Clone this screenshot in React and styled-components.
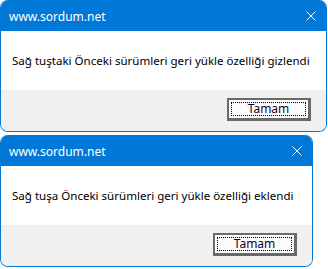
import React from 'react'
import styled, { createGlobalStyle } from 'styled-components'

const GlobalStyle = createGlobalStyle`
  body {
    margin: 0;
    background: #ffffff;
    font-family: "Noto Sans", "Open Sans", sans-serif;
  }
`

const Stack = styled.div`
  display: flex;
  flex-direction: column;
  align-items: flex-start;
  gap: 3px;
`

const Dialog = styled.div`
  width: ${p => p.$width}px;
  box-sizing: border-box;
  border: 1px solid #0078d7;
  border-top: none;
  border-radius: 8px;
  overflow: hidden;
  background: #ffffff;
`

const TitleBar = styled.div`
  height: 31px;
  background: #0078d7;
  display: flex;
  align-items: center;
  justify-content: space-between;
  padding: 1px 10px 0 8px;
  box-sizing: border-box;
  color: #ffffff;
  font-size: 12px;
`

const CloseIcon = styled.svg`
  width: 10px;
  height: 10px;
  display: block;
`

const Body = styled.div`
  height: 59px;
  padding: 22px 0 0 11px;
  box-sizing: border-box;
  font-size: 11.55px;
  line-height: 16px;
  color: #000000;
`

const Footer = styled.div`
  height: 41px;
  background: #f0f0f0;
  display: flex;
  justify-content: flex-end;
  align-items: flex-start;
  padding: 8px 15px 0 0;
  box-sizing: border-box;
`

const Button = styled.button`
  width: 84px;
  height: 23px;
  padding: 2px;
  box-sizing: border-box;
  background: #fbfbfb;
  border: 2px solid #6a6a6a;
  border-right-width: 3px;
  border-bottom-width: 3px;
  box-shadow: inset 1px 1px 0 #ffffff;
  font-family: "Noto Sans", "Open Sans", sans-serif;
  font-size: 12px;
  color: #10002a;
  display: flex;
  cursor: pointer;
`

const Focus = styled.span`
  flex: 1;
  border: 1px dotted #000000;
  display: flex;
  align-items: center;
  justify-content: center;
  line-height: 12px;
  padding-bottom: 1px;
`

const MessageBox = ({ width, message }) => (
  <Dialog $width={width}>
    <TitleBar>
      <span>www.sordum.net</span>
      <CloseIcon viewBox="0 0 10 10">
        <path d="M0.5 0.5 L9.5 9.5 M9.5 0.5 L0.5 9.5" stroke="#ffffff" strokeWidth="1" fill="none" />
      </CloseIcon>
    </TitleBar>
    <Body>{message}</Body>
    <Footer>
      <Button>
        <Focus>Tamam</Focus>
      </Button>
    </Footer>
  </Dialog>
)

const App = () => (
  <>
    <GlobalStyle />
    <Stack>
      <MessageBox width={327} message="Sağ tuştaki Önceki sürümleri geri yükle özelliği gizlendi" />
      <MessageBox width={313} message="Sağ tuşa Önceki sürümleri geri yükle özelliği eklendi" />
    </Stack>
  </>
)

export default App
